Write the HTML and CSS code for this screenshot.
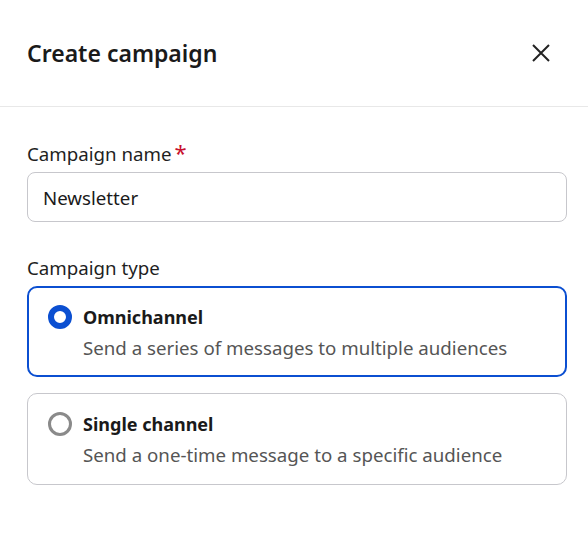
FILE: index.html
```html
<!DOCTYPE html>
<html>
<head>
<meta charset="utf-8">
<link rel="stylesheet" href="styles.css">
</head>
<body>
<div class="dialog">
  <header class="header">
    <h1 class="title">Create campaign</h1>
    <button class="close" aria-label="Close">
      <svg width="20" height="20" viewBox="0 0 20 20"><path d="M2 2 L18 18 M18 2 L2 18" stroke="#222" stroke-width="2" fill="none"/></svg>
    </button>
  </header>
  <div class="body">
    <div class="field">
      <label class="label">Campaign name<span class="req">*</span></label>
      <div class="input">Newsletter</div>
    </div>
    <div class="field">
      <div class="label">Campaign type</div>
      <div class="options">
        <div class="option selected">
          <span class="radio on"></span>
          <div class="opt-text">
            <div class="opt-title">Omnichannel</div>
            <div class="opt-desc">Send a series of messages to multiple audiences</div>
          </div>
        </div>
        <div class="option">
          <span class="radio"></span>
          <div class="opt-text">
            <div class="opt-title">Single channel</div>
            <div class="opt-desc">Send a one-time message to a specific audience</div>
          </div>
        </div>
      </div>
    </div>
  </div>
</div>
</body>
</html>
```
FILE: styles.css
```css
* { box-sizing: border-box; }
html, body { margin: 0; background: #fff; }
body { font-family: "Noto Sans", "Open Sans", sans-serif; color: #1f1f1f; }
.header {
  height: 107px;
  display: flex;
  align-items: center;
  justify-content: space-between;
  padding: 0 27px 0 27px;
  border-bottom: 1px solid #e8e8e8;
}
.title { margin: 0; font-size: 23px; font-weight: 600; color: #1a1a1a; }
.close { background: none; border: 0; padding: 0; width: 24px; height: 24px; display: flex; align-items: center; justify-content: center; margin-right: 8px; }
.body { padding: 34px 21px 0 27px; display: flex; flex-direction: column; gap: 33px; }
.field { display: flex; flex-direction: column; gap: 5px; }
.label { font-size: 18.7px; line-height: 26px; color: #1f1f1f; }
.req { color: #c8102e; font-size: 22px; margin-left: 3px; line-height: 0; }
.input {
  height: 50px; border: 1px solid #c7c7cc; border-radius: 8px;
  padding: 0 15px; display: flex; align-items: center; font-size: 18.7px; color: #1a1a1a;
}
.options { display: flex; flex-direction: column; gap: 16px; }
.option {
  display: flex; align-items: flex-start; gap: 11px;
  border: 1px solid #c7c7cc; border-radius: 10px;
  padding: 18px 20px 14px 20px; min-height: 92px;
}
.option.selected { border: 2px solid #0b4fd1; padding: 17px 19px 13px; min-height: 91px; }
.radio { width: 24px; height: 24px; border-radius: 50%; border: 3px solid #8a8a8a; flex: none; margin-top: 0; }
.radio.on { border: 6px solid #0b4fd1; }
.opt-text { display: flex; flex-direction: column; gap: 6px; }
.opt-title { font-size: 18px; font-weight: 700; color: #1a1a1a; line-height: 24px; }
.opt-desc { font-size: 18.7px; color: #555; line-height: 26px; }
```
